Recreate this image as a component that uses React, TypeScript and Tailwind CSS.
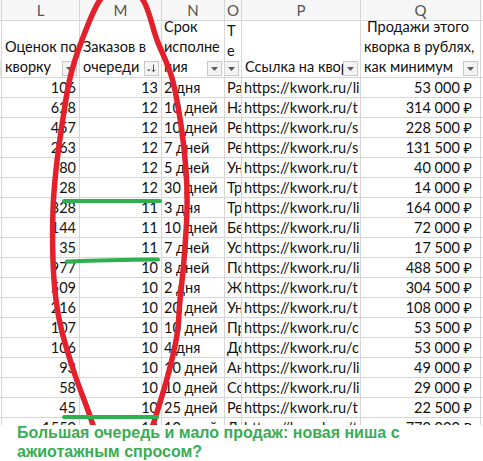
import React from 'react';

const COLS = 'grid-cols-[2px_78px_82px_63px_17px_119px_120px_2px]';

const rows: string[][] = [
    ['106', '13', '2 дня', 'Ра', 'https://kwork.ru/li', '53 000 ₽'],
    ['628', '12', '10 дней', 'На', 'https://kwork.ru/t', '314 000 ₽'],
    ['457', '12', '10 дней', 'Ре', 'https://kwork.ru/s', '228 500 ₽'],
    ['263', '12', '7 дней', 'Ре', 'https://kwork.ru/s', '131 500 ₽'],
    ['80', '12', '5 дней', 'Ун', 'https://kwork.ru/t', '40 000 ₽'],
    ['28', '12', '30 дней', 'Тр', 'https://kwork.ru/t', '14 000 ₽'],
    ['328', '11', '3 дня', 'Тр', 'https://kwork.ru/li', '164 000 ₽'],
    ['144', '11', '10 дней', 'Бе', 'https://kwork.ru/li', '72 000 ₽'],
    ['35', '11', '7 дней', 'Ус', 'https://kwork.ru/li', '17 500 ₽'],
    ['977', '10', '8 дней', 'По', 'https://kwork.ru/li', '488 500 ₽'],
    ['509', '10', '2 дня', 'Жи', 'https://kwork.ru/t', '304 500 ₽'],
    ['216', '10', '20 дней', 'Ун', 'https://kwork.ru/t', '108 000 ₽'],
    ['107', '10', '10 дней', 'Пр', 'https://kwork.ru/c', '53 500 ₽'],
    ['106', '10', '4 дня', 'До', 'https://kwork.ru/c', '53 000 ₽'],
    ['93', '10', '10 дней', 'Ан', 'https://kwork.ru/li', '49 000 ₽'],
    ['58', '10', '10 дней', 'Со', 'https://kwork.ru/li', '29 000 ₽'],
    ['45', '10', '25 дней', 'Ре', 'https://kwork.ru/t', '22 500 ₽'],
    ['1550', '10', '10 дней', 'Ди', 'https://kwork.ru/t', '770 000 ₽'],
];

// hand drawn red loop around column M
const loop = [
    [121, -13], [143, 0], [157, 40], [172, 78], [181, 125], [186, 170], [187, 210], [184, 260],
    [180, 300], [177, 335], [168, 375], [153, 425], [138, 470], [121, 488], [104, 470],
    [93, 425], [75, 375], [62, 332], [56, 300], [53, 260], [53, 210], [56, 170], [62, 125],
    [70, 78], [82, 40], [100, 0],
];

function smooth(pts: number[][]) {
    const n = pts.length;
    let d = `M${pts[0][0]},${pts[0][1]}`;
    for (let i = 0; i < n; i++) {
        const p0 = pts[(i - 1 + n) % n];
        const p1 = pts[i];
        const p2 = pts[(i + 1) % n];
        const p3 = pts[(i + 2) % n];
        const c1 = [p1[0] + (p2[0] - p0[0]) / 6, p1[1] + (p2[1] - p0[1]) / 6];
        const c2 = [p2[0] - (p3[0] - p1[0]) / 6, p2[1] - (p3[1] - p1[1]) / 6];
        d += ` C${c1[0]},${c1[1]} ${c2[0]},${c2[1]} ${p2[0]},${p2[1]}`;
    }
    return d + 'Z';
}

function FilterBtn({sorted = false}: {sorted?: boolean}) {
    return (
        <div className="w-[15px] h-[15px] shrink-0 mr-[2px] mb-[1px] border border-[#c9c9c9] bg-[#f4f4f4] flex items-center justify-center">
            {sorted ? (
                <svg width="11" height="11" viewBox="0 0 11 11">
                    <path d="M1 6.5h3.5L2.75 8.5z" fill="#555"/>
                    <path d="M7.5 1.5v7M5.7 6.7l1.8 2 1.8-2" stroke="#555" strokeWidth="1" fill="none"/>
                </svg>
            ) : (
                <svg width="7" height="4" viewBox="0 0 7 4">
                    <path d="M0 0h7L3.5 4z" fill="#5a5a5a"/>
                </svg>
            )}
        </div>
    );
}

const cell = 'border-r border-b border-[#d6d6d6] overflow-hidden whitespace-nowrap';

export default function App() {
    return (
        <div className="w-[483px] h-[461px] bg-white overflow-hidden font-['Lato',_'Noto_Sans',_sans-serif] text-[#111]">
            {/* Таблица */}
            <div className="relative h-[425px] overflow-hidden">
                {/* буквы столбцов */}
                <div className={`grid ${COLS} h-[21px] bg-[#f7f7f7] text-[#555] text-[15px] leading-[21px] text-center`}>
                    <div className="border-r border-b border-[#d6d6d6]"/>
                    <div className={cell}>L</div>
                    <div className={cell}>M</div>
                    <div className={cell}>N</div>
                    <div className={cell}>O</div>
                    <div className={cell}>P</div>
                    <div className={cell}>Q</div>
                    <div className="border-b border-[#d6d6d6]"/>
                </div>

                {/* заголовки */}
                <div className={`grid ${COLS} h-[57px] text-[14.5px] leading-[20px]`}>
                    <div className={`${cell} flex items-end`}>
                        <div className="w-[2px] h-[15px] mb-[1px] bg-[#e4e4e4]"/>
                    </div>
                    <div className={`${cell} flex flex-col justify-end pl-[3px]`}>
                        <div>Оценок по</div>
                        <div className="flex items-end justify-between"><span>кворку</span><FilterBtn/></div>
                    </div>
                    <div className={`${cell} flex flex-col justify-end pl-[3px]`}>
                        <div>Заказов в</div>
                        <div className="flex items-end justify-between"><span>очереди</span><FilterBtn sorted/></div>
                    </div>
                    <div className={`${cell} flex flex-col justify-end pl-[2px]`}>
                        <div>Срок</div>
                        <div>исполне</div>
                        <div className="flex items-end justify-between"><span>ния</span><FilterBtn/></div>
                    </div>
                    <div className={`${cell} flex flex-col justify-end`}>
                        <div className="pl-[2px]">Т</div>
                        <div className="pl-[2px]">е</div>
                        <div className="flex justify-end"><FilterBtn/></div>
                    </div>
                    <div className={`${cell} flex flex-col justify-end pl-[3px]`}>
                        <div className="flex items-end">
                            <span className="flex-1 overflow-hidden">Ссылка на кворк</span>
                            <FilterBtn/>
                        </div>
                    </div>
                    <div className={`${cell} flex flex-col justify-end pl-[3px]`}>
                        <div className="pl-[3px]">Продажи этого</div>
                        <div>кворка в рублях,</div>
                        <div className="flex items-end justify-between"><span>как минимум</span><FilterBtn/></div>
                    </div>
                    <div className="border-b border-[#d6d6d6]"/>
                </div>

                {/* строки */}
                {rows.map((r, i) => (
                    <div key={i} className={`grid ${COLS} h-[20px] text-[14.5px] leading-[19px]`}>
                        <div className={cell}/>
                        <div className={`${cell} text-right pr-[3px]`}>{r[0]}</div>
                        <div className={`${cell} text-right pr-[3px]`}>{r[1]}</div>
                        <div className={`${cell} pl-[2px]`}>{r[2]}</div>
                        <div className={`${cell} pl-[2px]`}>{r[3]}</div>
                        <div className={`${cell} pl-[2px]`}>{r[4]}</div>
                        <div className={`${cell} text-right pr-[8px]`}>{r[5]}</div>
                        <div className="border-b border-[#d6d6d6]"/>
                    </div>
                ))}

                {/* пометки поверх таблицы */}
                <svg className="absolute inset-0 pointer-events-none" width="483" height="425" viewBox="0 0 483 425">
                    <path d={smooth(loop)} fill="none" stroke="#e3202b" strokeWidth="5.5"/>
                    <g stroke="#2db14e" strokeWidth="4" strokeLinecap="round" fill="none">
                        <path d="M64 201 L160 201"/>
                        <path d="M67 261.5 Q110 260 158 259.5"/>
                        <path d="M64 417 L157 417"/>
                    </g>
                </svg>
            </div>

            {/* Подпись */}
            <div className="-mt-[2px] px-[17px] font-['Liberation_Sans',_Arial,_sans-serif] font-bold text-[16px] leading-[19px] text-[#39ad53]">
                Большая очередь и мало продаж: новая ниша с<br/>
                ажиотажным спросом?
            </div>
        </div>
    );
}
